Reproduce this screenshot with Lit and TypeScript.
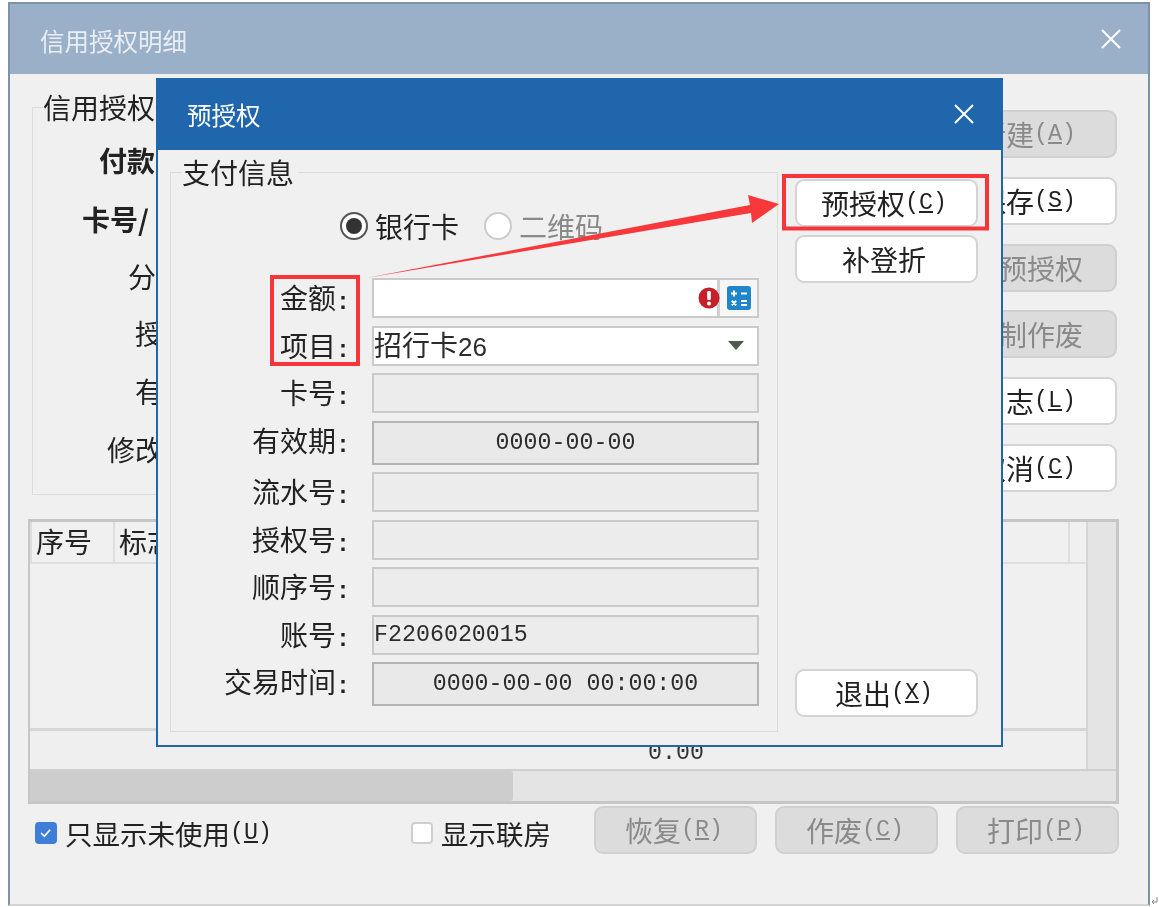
import { LitElement, html, css, svg } from "lit";
import { customElement } from "lit/decorators.js";

const mn = (key: string) => html`<span class="lat">(<u>${key}</u>)</span>`;

const close = html`<svg class="x" viewBox="0 0 20 20" width="20" height="20"><path d="M1 1 L19 19 M19 1 L1 19" stroke="#fff" stroke-width="2" fill="none"/></svg>`;

const outerLabels = [
  { t: "付款", x: 66, b: true },
  { t: "卡号/", x: 49, b: true },
  { t: "分", x: 95, b: false },
  { t: "授", x: 102, b: false },
  { t: "有", x: 102, b: false },
  { t: "修改", x: 74, b: false },
];

@customElement("app-root")
export class AppRoot extends LitElement {
  static styles = css`
    :host { display: block; width: 1159px; height: 907px; position: relative; overflow: hidden; background: #fff;
      font-family: "Noto Sans CJK SC", "Liberation Sans", sans-serif; font-size: 28px; color: #222; }
    .soft { position: absolute; inset: 0; filter: blur(0.45px); }
    .lat { font-family: "Liberation Mono", monospace; font-size: 23.3px; }
    .lat u { text-underline-offset: 2px; text-decoration-thickness: 1.5px; }
    .win { position: absolute; box-sizing: border-box; background: #f0f0f0; display: flex; flex-direction: column; }
    .outer { left: 8px; top: 2px; width: 1142px; height: 904px; border: 2px solid #7d92a8; border-bottom-color: #d4d4d4; }
    .title { flex: none; display: flex; align-items: center; justify-content: space-between; color: #fff; font-size: 24.5px; }
    .outer .title { height: 70px; background: #9ab0c9; color: #e9eef4; padding: 0 27px 0 30px; }
    .outer .title span { position: relative; top: 1px; }
    .obody { padding: 15px 0 0 18px; flex: 1; }
    .toprow { display: flex; align-items: flex-start; }
    fieldset { margin: 0; padding: 0; min-width: 0; border: 1.5px solid #dcdcdc; }
    legend { padding: 0; line-height: 36px; }
    .info { box-sizing: border-box; width: 893px; margin-left: 4px; padding: 17px 0 27px; margin-right: 10px; }
    .info legend { margin-left: 10px; }
    .info-rows { display: grid; grid-template-rows: 59px 57px 57px 58px 58px 36px; line-height: 36px; }
    .info-rows div { white-space: nowrap; }
    .b { font-weight: 700; }
    .side { display: flex; flex-direction: column; gap: 18.8px; margin-top: 21px; }
    .btn { box-sizing: border-box; width: 183px; height: 48px; display: flex; align-items: center; justify-content: center;
      background: #fff; border: 2px solid #d4d4d4; border-radius: 9px; white-space: nowrap; }
    .btn.off { background: #dcdcdc; border-color: #d0d0d0; color: #8a8a8a; }
    .side .btn { width: 182px; padding-left: 2px; }

    .table { box-sizing: border-box; width: 1091px; height: 285px; margin-top: 24px; border: 3px solid #c6c6c6; border-left-width: 2px; background: #f0f0f0;
      display: grid; grid-template-columns: 1fr 30px; grid-template-rows: 1fr 32px; }
    .tmain { display: flex; flex-direction: column; }
    .thead { height: 42px; box-sizing: border-box; display: flex; border-bottom: 2px solid #dedede; line-height: 38px; }
    .th { box-sizing: border-box; border-left: 2px solid #dedede; padding-left: 4px; white-space: nowrap; }
    .th.a { width: 83px; }
    .th.b2 { flex: 1; }
    .th.c { width: 18px; }
    .tbody { flex: 1; }
    .tfoot { height: 41px; box-sizing: border-box; border-top: 3px solid #d6d6d6; padding-left: 618px; line-height: 32px; background: #efefef; color: #333; }
    .vs { background: #e4e4e4; border-left: 2px solid #d6d6d6; }
    .hs { grid-column: 1 / 3; background: #e4e4e4; border-top: 2px solid #cfcfcf; }
    .thumb { width: 483px; height: 100%; background: #cdcdcd; border-radius: 0 3px 3px 0; }

    .bottom { display: flex; align-items: center; margin-top: 2px; width: 1091px; height: 48px; }
    .chk { display: flex; align-items: center; white-space: nowrap; position: relative; top: 3px; font-size: 27.5px; }
    .chk .box { box-sizing: border-box; width: 22px; height: 22px; border-radius: 4px; margin-right: 8px; flex: none; background: #fff; border: 2px solid #cfcfcf; display: flex; }
    .chk .box.on { background: #3f7ed8; border-color: #3f7ed8; }
    .c1 { margin-left: 7px; }
    .c2 { margin-left: 139px; }
    .bbtns { margin-left: auto; display: flex; gap: 18px; }
    .bbtns .btn { width: 163px; padding-right: 3px; }

    .dlg { left: 156px; top: 78px; width: 847px; height: 669px; border: 2px solid #2066ac; border-top: 0; }
    .dlg .title { height: 72px; margin: 0 -2px; background: #2066ac; padding: 0 29px 0 31px; }
    .dbody { display: flex; flex: 1; padding: 4px 0 14px 12px; }
    .pay { box-sizing: border-box; width: 608px; padding: 0 0 25px; }
    .pay legend { margin-left: 11px; padding-right: 4px; }
    .radios { display: flex; align-items: center; height: 30px; margin: 21px 0 37px 169px; line-height: 30px; }
    .radio { box-sizing: border-box; width: 28px; height: 28px; border-radius: 50%; border: 2px solid #555; background: #fff; margin-right: 7px; display: flex; align-items: center; justify-content: center; flex: none; }
    .radio i { width: 16px; height: 16px; border-radius: 50%; background: #333; }
    .radio.off { border-color: #ccc; margin-left: 25px; }
    .muted { color: #8a8a8a; }
    .form { display: grid; grid-template-columns: 179px 387px; column-gap: 22px; row-gap: 7.5px; grid-template-rows: 40px 40px 40px 44px 40px 40px 40px 40px 44px; }
    .lbl { text-align: right; line-height: 38px; white-space: nowrap; color: #222; }
    .lbl .lat { font-weight: 700; }
    .in { box-sizing: border-box; border: 2px solid #cacaca; background: #ececec; display: flex; align-items: center; overflow: hidden; white-space: nowrap; color: #2c2c2c; }
    .in.w { background: #fff; }
    .in.date { justify-content: center; border-color: #b4b4b4; background: #e9e9e9; }
    .amount { display: flex; justify-content: flex-end; padding: 0; }
    .amount .err { margin-right: -3px; flex: none; position: relative; z-index: 1; }
    .amount .calc { box-sizing: border-box; width: 40px; height: 36px; border-left: 3px solid #d0d0d0; flex: none; display: flex; align-items: center; justify-content: center; background: #f6f6f6; }
    .sel { justify-content: space-between; padding-right: 13px; line-height: 34px; }
    .sel .n { font-family: "Liberation Sans", sans-serif; font-size: 26px; }
    .dbtns { display: flex; flex-direction: column; gap: 8px; margin: 25px 0 15px 17px; }
    .dbtns .btn { padding-right: 5px; }
    .dbtns .btn:last-child { margin-top: auto; }
    .over { position: absolute; left: 0; top: 0; pointer-events: none; }
  `;

  private row(label: unknown, body: unknown) {
    return html`<div class="lbl">${label}<span class="lat">:</span></div>${body}`;
  }

  render() {
    return html`
      <div class="soft">
        <section class="win outer">
          <header class="title"><span>信用授权明细</span>${close}</header>
          <div class="obody">
            <div class="toprow">
              <fieldset class="info">
                <legend>信用授权</legend>
                <div class="info-rows">
                  ${outerLabels.map(
                    (l) => html`<div class=${l.b ? "b" : ""} style="padding-left:${l.x}px">${l.t}</div>`
                  )}
                </div>
              </fieldset>
              <div class="side">
                <div class="btn off">新建${mn("A")}</div>
                <div class="btn">保存${mn("S")}</div>
                <div class="btn off">补预授权</div>
                <div class="btn off">预制作废</div>
                <div class="btn">日志${mn("L")}</div>
                <div class="btn">取消${mn("C")}</div>
              </div>
            </div>
            <div class="table">
              <div class="tmain">
                <div class="thead">
                  <div class="th a">序号</div>
                  <div class="th b2">标志</div>
                  <div class="th c"></div>
                </div>
                <div class="tbody"></div>
                <div class="tfoot"><span class="lat">0.00</span></div>
              </div>
              <div class="vs"></div>
              <div class="hs"><div class="thumb"></div></div>
            </div>
            <div class="bottom">
              <label class="chk c1">
                <span class="box on"><svg viewBox="0 0 22 22" width="18" height="18"><path d="M5 11 L9 15 L16 7" stroke="#fff" stroke-width="2" fill="none"/></svg></span>只显示未使用<span class="lat">(<u>U</u>)</span>
              </label>
              <label class="chk c2"><span class="box"></span>显示联房</label>
              <div class="bbtns">
                <div class="btn off">恢复${mn("R")}</div>
                <div class="btn off">作废${mn("C")}</div>
                <div class="btn off">打印${mn("P")}</div>
              </div>
            </div>
          </div>
        </section>

        <section class="win dlg">
          <header class="title"><span>预授权</span>${close}</header>
          <div class="dbody">
            <fieldset class="pay">
              <legend>支付信息</legend>
              <div class="radios">
                <span class="radio"><i></i></span>银行卡
                <span class="radio off"></span><span class="muted">二维码</span>
              </div>
              <div class="form">
                ${this.row("金额", html`<div class="in w amount">
                  <svg class="err" width="22" height="22" viewBox="0 0 22 22"><circle cx="11" cy="11" r="10.5" fill="#c5202a"/><rect x="9.2" y="4" width="3.6" height="9" rx="1.2" fill="#fff"/><circle cx="11" cy="16.5" r="2" fill="#fff"/></svg>
                  <div class="calc"><svg width="24" height="24" viewBox="0 0 24 24"><rect width="24" height="24" rx="3" fill="#1f86c9"/><path d="M4 7.5h6M7 4.5v6M14 7.5h6M4.8 14.8l4.4 4.4M9.2 14.8l-4.4 4.4M14 15h6M14 19h6" stroke="#fff" stroke-width="2" fill="none"/></svg></div>
                </div>`)}
                ${this.row("项目", html`<div class="in w sel"><span>招行卡<span class="n">26</span></span><svg width="16" height="9" viewBox="0 0 16 9"><path d="M0 0h16L8 9z" fill="#4f5a4e"/></svg></div>`)}
                ${this.row("卡号", html`<div class="in"></div>`)}
                ${this.row("有效期", html`<div class="in date"><span class="lat">0000-00-00</span></div>`)}
                ${this.row("流水号", html`<div class="in"></div>`)}
                ${this.row("授权号", html`<div class="in"></div>`)}
                ${this.row("顺序号", html`<div class="in"></div>`)}
                ${this.row("账号", html`<div class="in"><span class="lat">F2206020015</span></div>`)}
                ${this.row("交易时间", html`<div class="in date"><span class="lat">0000-00-00 00:00:00</span></div>`)}
              </div>
            </fieldset>
            <div class="dbtns">
              <div class="btn">预授权${mn("C")}</div>
              <div class="btn">补登折</div>
              <div class="btn">退出${mn("X")}</div>
            </div>
          </div>
        </section>
      </div>

      <svg class="over" width="1159" height="907" viewBox="0 0 1159 907">
        ${svg`
          <rect x="272" y="277" width="86" height="87" fill="none" stroke="#f5363a" stroke-width="4"/>
          <rect x="784" y="176" width="203" height="52.500" fill="none" stroke="#f5363a" stroke-width="4"/>
          <polygon points="366,278 750,205 748,195 779,204 752,223 751,213" fill="#f8383a"/>
          <path d="M1152 902h5v-5M1152 902l2-2M1152 902l2 2" stroke="#888" stroke-width="1" fill="none"/>
        `}
      </svg>
    `;
  }
}
